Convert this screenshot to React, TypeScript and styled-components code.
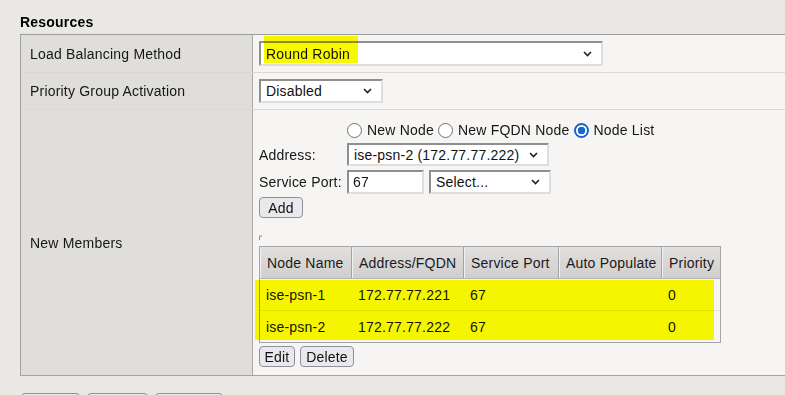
import React from "react";
import styled, { createGlobalStyle } from "styled-components";

const Global = createGlobalStyle`
  html, body { margin: 0; padding: 0; overflow: hidden; background: #e9e8e5; }
  body { font-family: "Liberation Sans", Arial, sans-serif; font-size: 14px; color: #161616; letter-spacing: 0.2px; }
  * { box-sizing: border-box; }
`;

const Page = styled.div`
  padding: 14px 0 0 20px;
  width: 820px;
`;

const Title = styled.h2`
  margin: 0 0 4px;
  font-size: 14px;
  line-height: 16px;
  font-weight: bold;
  color: #000;
`;

const Section = styled.div`
  width: 790px;
  border-top: 1px solid #9b9b9b;
  border-left: 1px solid #a3a3a3;
  border-bottom: 1px solid #a3a3a3;
`;

const Row = styled.div<{ $h: number }>`
  display: grid;
  grid-template-columns: 232px 1fr;
  min-height: ${(p) => p.$h}px;
  & + & {
    border-top: 1px solid #d9d8d5;
  }
`;

const Label = styled.div`
  background: #dfdedb;
  border-right: 1px solid #a9a9a9;
  padding-left: 9px;
  display: flex;
  align-items: center;
`;

const Value = styled.div<{ $block?: boolean }>`
  background: #f6f5f3;
  padding: ${(p) => (p.$block ? "11px 6px 8px" : "0 6px")};
  display: ${(p) => (p.$block ? "block" : "flex")};
  align-items: center;
`;

const SelectBox = styled.div<{ $w: number; $h: number }>`
  position: relative;
  width: ${(p) => p.$w}px;
  height: ${(p) => p.$h}px;
  background: #fff;
  border: 2px solid;
  border-color: #8f8f8f #dedede #dedede #8f8f8f;
  display: flex;
  align-items: center;
  justify-content: space-between;
  padding: 0 9px 0 5px;
  color: #111;
`;

const Highlight = styled.div<{ $l: number; $t: number; $w: number; $h: number }>`
  position: absolute;
  left: ${(p) => p.$l}px;
  top: ${(p) => p.$t}px;
  width: ${(p) => p.$w}px;
  height: ${(p) => p.$h}px;
  background: #f8f800;
  mix-blend-mode: darken;
  pointer-events: none;
`;

const TextInput = styled.div<{ $w: number }>`
  width: ${(p) => p.$w}px;
  height: 24px;
  background: #fff;
  border: 2px solid;
  border-color: #8f8f8f #dedede #dedede #8f8f8f;
  display: flex;
  align-items: center;
  padding-left: 4px;
`;

const FormGrid = styled.div`
  display: grid;
  grid-template-columns: 88px auto;
  row-gap: 4px;
  align-items: center;
  justify-content: start;
`;

const RadioRow = styled.div`
  grid-column: 2;
  height: 18px;
  display: flex;
  align-items: center;
`;

const RadioOption = styled.label`
  display: inline-flex;
  align-items: center;
  gap: 5px;
  margin-right: 4px;
`;

const RadioDot = styled.span<{ $checked?: boolean }>`
  width: 15px;
  height: 15px;
  border-radius: 50%;
  border: ${(p) => (p.$checked ? "2px solid #1767cc" : "1px solid #707070")};
  background: ${(p) =>
    p.$checked ? "radial-gradient(circle, #1767cc 0 3.5px, #fff 4.1px)" : "#fff"};
`;

const Inline = styled.div`
  display: flex;
  gap: 5px;
`;

const Button = styled.button<{ $w: number }>`
  width: ${(p) => p.$w}px;
  height: 21px;
  padding: 0;
  font-family: "Liberation Sans", Arial, sans-serif;
  font-size: 14px;
  letter-spacing: 0.2px;
  color: #111;
  background: #e9e9ed;
  border: 1px solid #8f8f9d;
  border-radius: 4px;
`;

const AddRow = styled.div`
  grid-column: 1 / -1;
  margin-top: -1px;
`;

const Mark = styled.svg`
  display: block;
  margin-top: 17px;
`;

const TableWrap = styled.div`
  position: relative;
  margin-top: 6px;
  width: 462px;
`;

const Grid = styled.div`
  display: grid;
  grid-template-columns: 92px 112px 95px 103px 58px;
  border: 1px solid #a5a5a5;
  background: #f6f5f3;
`;

const Th = styled.div<{ $last?: boolean }>`
  height: 32px;
  display: flex;
  align-items: center;
  padding-left: 7px;
  background: linear-gradient(#e1e0de, #d0cfcd);
  border-bottom: 1px solid #b3b3b3;
  border-right: ${(p) => (p.$last ? "none" : "1px solid #a3a3a3")};
  box-shadow: inset 1px 0 0 #f2f2f2;
  color: #1a1a1a;
  white-space: nowrap;
`;

const Td = styled.div<{ $sep?: boolean }>`
  height: ${(p) => (p.$sep ? 32 : 31)}px;
  display: flex;
  align-items: center;
  padding-left: 6px;
  border-bottom: ${(p) => (p.$sep ? "1px solid #e2e2e2" : "none")};
`;

const Actions = styled.div`
  display: flex;
  gap: 5px;
  margin-top: 3px;
`;

const Footer = styled.div`
  display: flex;
  gap: 7px;
  margin-top: 17px;
  padding-left: 1px;
`;

const Chevron = () => (
  <svg width="9" height="6" viewBox="0 0 9 6">
    <path d="M1 1 L4.5 4.5 L8 1" fill="none" stroke="#222" strokeWidth="1.6" />
  </svg>
);

const cols = ["Node Name", "Address/FQDN", "Service Port", "Auto Populate", "Priority"];
const rows = [
  ["ise-psn-1", "172.77.77.221", "67", "", "0"],
  ["ise-psn-2", "172.77.77.222", "67", "", "0"],
];

export default function App() {
  return (
    <>
      <Global />
      <Page>
        <Title>Resources</Title>
        <Section>
          <Row $h={37}>
            <Label>Load Balancing Method</Label>
            <Value>
              <SelectBox $w={344} $h={25}>
                <span>Round Robin</span>
                <Chevron />
                <Highlight $l={3} $t={-7} $w={94} $h={27} />
              </SelectBox>
            </Value>
          </Row>
          <Row $h={37}>
            <Label>Priority Group Activation</Label>
            <Value>
              <SelectBox $w={124} $h={24}>
                <span>Disabled</span>
                <Chevron />
              </SelectBox>
            </Value>
          </Row>
          <Row $h={264}>
            <Label>New Members</Label>
            <Value $block>
              <FormGrid>
                <RadioRow>
                  <RadioOption>
                    <RadioDot />
                    New Node
                  </RadioOption>
                  <RadioOption>
                    <RadioDot />
                    New FQDN Node
                  </RadioOption>
                  <RadioOption>
                    <RadioDot $checked />
                    Node List
                  </RadioOption>
                </RadioRow>
                <span>Address:</span>
                <SelectBox $w={202} $h={23}>
                  <span>ise-psn-2 (172.77.77.222)</span>
                  <Chevron />
                </SelectBox>
                <span>Service Port:</span>
                <Inline>
                  <TextInput $w={77}>67</TextInput>
                  <SelectBox $w={122} $h={24}>
                    <span>Select...</span>
                    <Chevron />
                  </SelectBox>
                </Inline>
                <AddRow>
                  <Button $w={44}>Add</Button>
                </AddRow>
              </FormGrid>
              <Mark width="4" height="5" viewBox="0 0 4 5">
                <path d="M0.5 5 V1 H3" fill="none" stroke="#8a8a8a" strokeWidth="1" />
              </Mark>
              <TableWrap>
                <Grid>
                  {cols.map((c, i) => (
                    <Th key={c} $last={i === cols.length - 1}>
                      {c}
                    </Th>
                  ))}
                  {rows.map((r, ri) =>
                    r.map((v, ci) => (
                      <Td key={`${ri}-${ci}`} $sep={ri === 0}>
                        {v}
                      </Td>
                    ))
                  )}
                </Grid>
                <Highlight $l={-4} $t={34} $w={459} $h={60} />
              </TableWrap>
              <Actions>
                <Button $w={36}>Edit</Button>
                <Button $w={54}>Delete</Button>
              </Actions>
            </Value>
          </Row>
        </Section>
        <Footer>
          <Button $w={59} aria-label="Cancel" />
          <Button $w={61} aria-label="Repeat" />
          <Button $w={68} aria-label="Finished" />
        </Footer>
      </Page>
    </>
  );
}
